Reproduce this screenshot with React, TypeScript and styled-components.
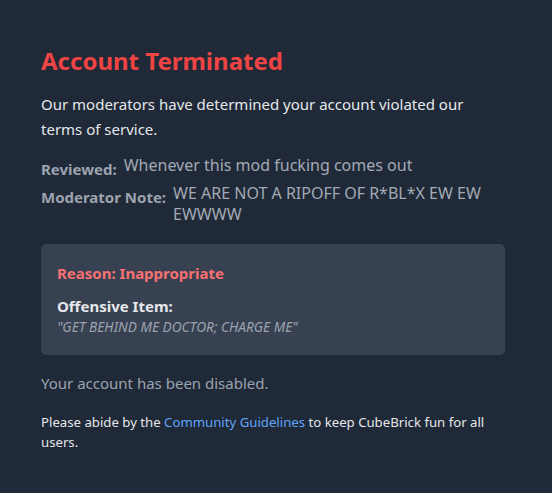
import React from "react";
import styled, { createGlobalStyle } from "styled-components";

const Global = createGlobalStyle`
  html, body { margin: 0; padding: 0; background: #1f2937; }
  body { font-family: "Noto Sans", "Open Sans", sans-serif; }
`;

const Page = styled.div`
  min-height: 493px;
  background: #1f2937;
  box-sizing: border-box;
  padding: 46px 47px 30px 41px;
`;

const Title = styled.h1`
  margin: 0 0 16px;
  color: #ef4444;
  font-size: 24px;
  font-weight: 700;
  line-height: 30px;
`;

const Lead = styled.p`
  margin: 0 0 13px;
  color: #e5e7eb;
  font-size: 15px;
  line-height: 25px;
`;

const Row = styled.div`
  display: flex;
  align-items: flex-start;
  gap: 7px;
  color: #9ca3af;
  margin-top: 3px;
`;

const Label = styled.span`
  font-weight: 700;
  font-size: 15px;
  line-height: 22px;
  padding-top: 3px;
  white-space: nowrap;
  color: #9ca3af;
`;

const Value = styled.span`
  font-size: 16px;
  line-height: 21px;
  color: #a3aab5;
`;

const Card = styled.div`
  margin-top: 19px;
  background: #374151;
  border-radius: 5px;
  padding: 18px 16px 17px 16px;
`;

const Reason = styled.div`
  color: #f87171;
  font-weight: 700;
  font-size: 15px;
  line-height: 22px;
  margin-bottom: 12px;
`;

const ItemLabel = styled.div`
  color: #e5e7eb;
  font-weight: 700;
  font-size: 15px;
  line-height: 20px;
`;

const Quote = styled.div`
  color: #9ca3af;
  font-style: italic;
  font-size: 13.7px;
  line-height: 22px;
`;

const Disabled = styled.p`
  margin: 16px 0 0;
  color: #9ca3af;
  font-size: 15px;
  line-height: 24px;
`;

const Note = styled.p`
  margin: 17px 0 0;
  color: #e5e7eb;
  font-size: 13.2px;
  line-height: 20px;
`;

const Link = styled.a`
  color: #60a5fa;
  text-decoration: none;
`;

export default function App() {
  return (
    <>
      <Global />
      <Page>
        <Title>Account Terminated</Title>
        <Lead>Our moderators have determined your account violated our terms of service.</Lead>
        <Row>
          <Label>Reviewed:</Label>
          <Value>Whenever this mod fucking comes out</Value>
        </Row>
        <Row>
          <Label>Moderator Note:</Label>
          <Value>WE ARE NOT A RIPOFF OF R*BL*X EW EW EWWWW</Value>
        </Row>
        <Card>
          <Reason>Reason: Inappropriate</Reason>
          <ItemLabel>Offensive Item:</ItemLabel>
          <Quote>"GET BEHIND ME DOCTOR; CHARGE ME"</Quote>
        </Card>
        <Disabled>Your account has been disabled.</Disabled>
        <Note>
          Please abide by the <Link href="#">Community Guidelines</Link> to keep CubeBrick fun for all users.
        </Note>
      </Page>
    </>
  );
}
